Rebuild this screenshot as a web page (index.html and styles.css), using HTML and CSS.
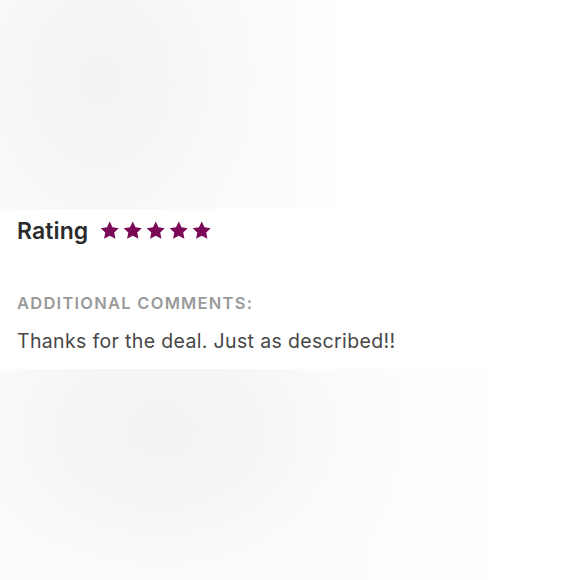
FILE: index.html
```html
<!DOCTYPE html>
<html>
<head>
<meta charset="utf-8">
<link rel="stylesheet" href="styles.css">
</head>
<body>
<div class="blur-top"></div>
<section class="review">
  <div class="rating-row">
    <span class="rating-label">Rating</span>
    <span class="stars">
      <svg class="star" viewBox="0 0 24 24"><path d="M12 1.8l3.1 6.4 7 .9-5.1 4.9 1.3 7L12 17.6 5.7 21l1.3-7-5.1-4.9 7-.9z"/></svg>
      <svg class="star" viewBox="0 0 24 24"><path d="M12 1.8l3.1 6.4 7 .9-5.1 4.9 1.3 7L12 17.6 5.7 21l1.3-7-5.1-4.9 7-.9z"/></svg>
      <svg class="star" viewBox="0 0 24 24"><path d="M12 1.8l3.1 6.4 7 .9-5.1 4.9 1.3 7L12 17.6 5.7 21l1.3-7-5.1-4.9 7-.9z"/></svg>
      <svg class="star" viewBox="0 0 24 24"><path d="M12 1.8l3.1 6.4 7 .9-5.1 4.9 1.3 7L12 17.6 5.7 21l1.3-7-5.1-4.9 7-.9z"/></svg>
      <svg class="star" viewBox="0 0 24 24"><path d="M12 1.8l3.1 6.4 7 .9-5.1 4.9 1.3 7L12 17.6 5.7 21l1.3-7-5.1-4.9 7-.9z"/></svg>
    </span>
  </div>
  <div class="comments">
    <h3 class="comments-title">ADDITIONAL COMMENTS:</h3>
    <p class="comments-text">Thanks for the deal. Just as described!!</p>
  </div>
</section>
<div class="blur-bottom"></div>
</body>
</html>
```
FILE: styles.css
```css
html, body {
  margin: 0;
  padding: 0;
  background: #ffffff;
}
body {
  width: 580px;
  height: 580px;
  overflow: hidden;
  font-family: "Inter", "Liberation Sans", sans-serif;
}
.blur-top {
  height: 209px;
  background:
    radial-gradient(ellipse 190px 230px at 100px 80px, #f4f2f3 0%, #f6f4f5 30%, #faf8f9 65%, rgba(255,255,255,0) 100%),
    linear-gradient(90deg, #fbfafa 0%, #fdfcfc 50%, #ffffff 60%);
}
.review {
  height: 160px;
  padding: 0 17px;
  box-sizing: border-box;
  background: #ffffff;
}
.rating-row {
  display: flex;
  align-items: center;
  gap: 11px;
  height: 44px;
}
.rating-label {
  font-size: 23px;
  font-weight: 600;
  letter-spacing: 0.1px;
  color: #2b2b2b;
  line-height: 26px;
}
.stars {
  display: flex;
  gap: 1.5px;
}
.star {
  width: 21.5px;
  height: 21.5px;
  fill: #7a0a57;
}
.comments {
  padding-top: 39px;
}
.comments-title {
  margin: 0;
  font-size: 16.5px;
  font-weight: 600;
  letter-spacing: 1.25px;
  color: #9a9a9a;
  line-height: 22px;
}
.comments-text {
  margin: 15px 0 0;
  font-size: 19.5px;
  font-weight: 400;
  letter-spacing: 0.35px;
  color: #474747;
  line-height: 24px;
}
.blur-bottom {
  height: 211px;
  background:
    radial-gradient(ellipse 260px 200px at 160px 60px, #f4f3f3 0%, #f6f5f5 35%, #fafafa 65%, rgba(255,255,255,0) 100%),
    linear-gradient(90deg, #fbfbfb 0%, #fcfcfc 60%, #ffffff 90%);
}
```
